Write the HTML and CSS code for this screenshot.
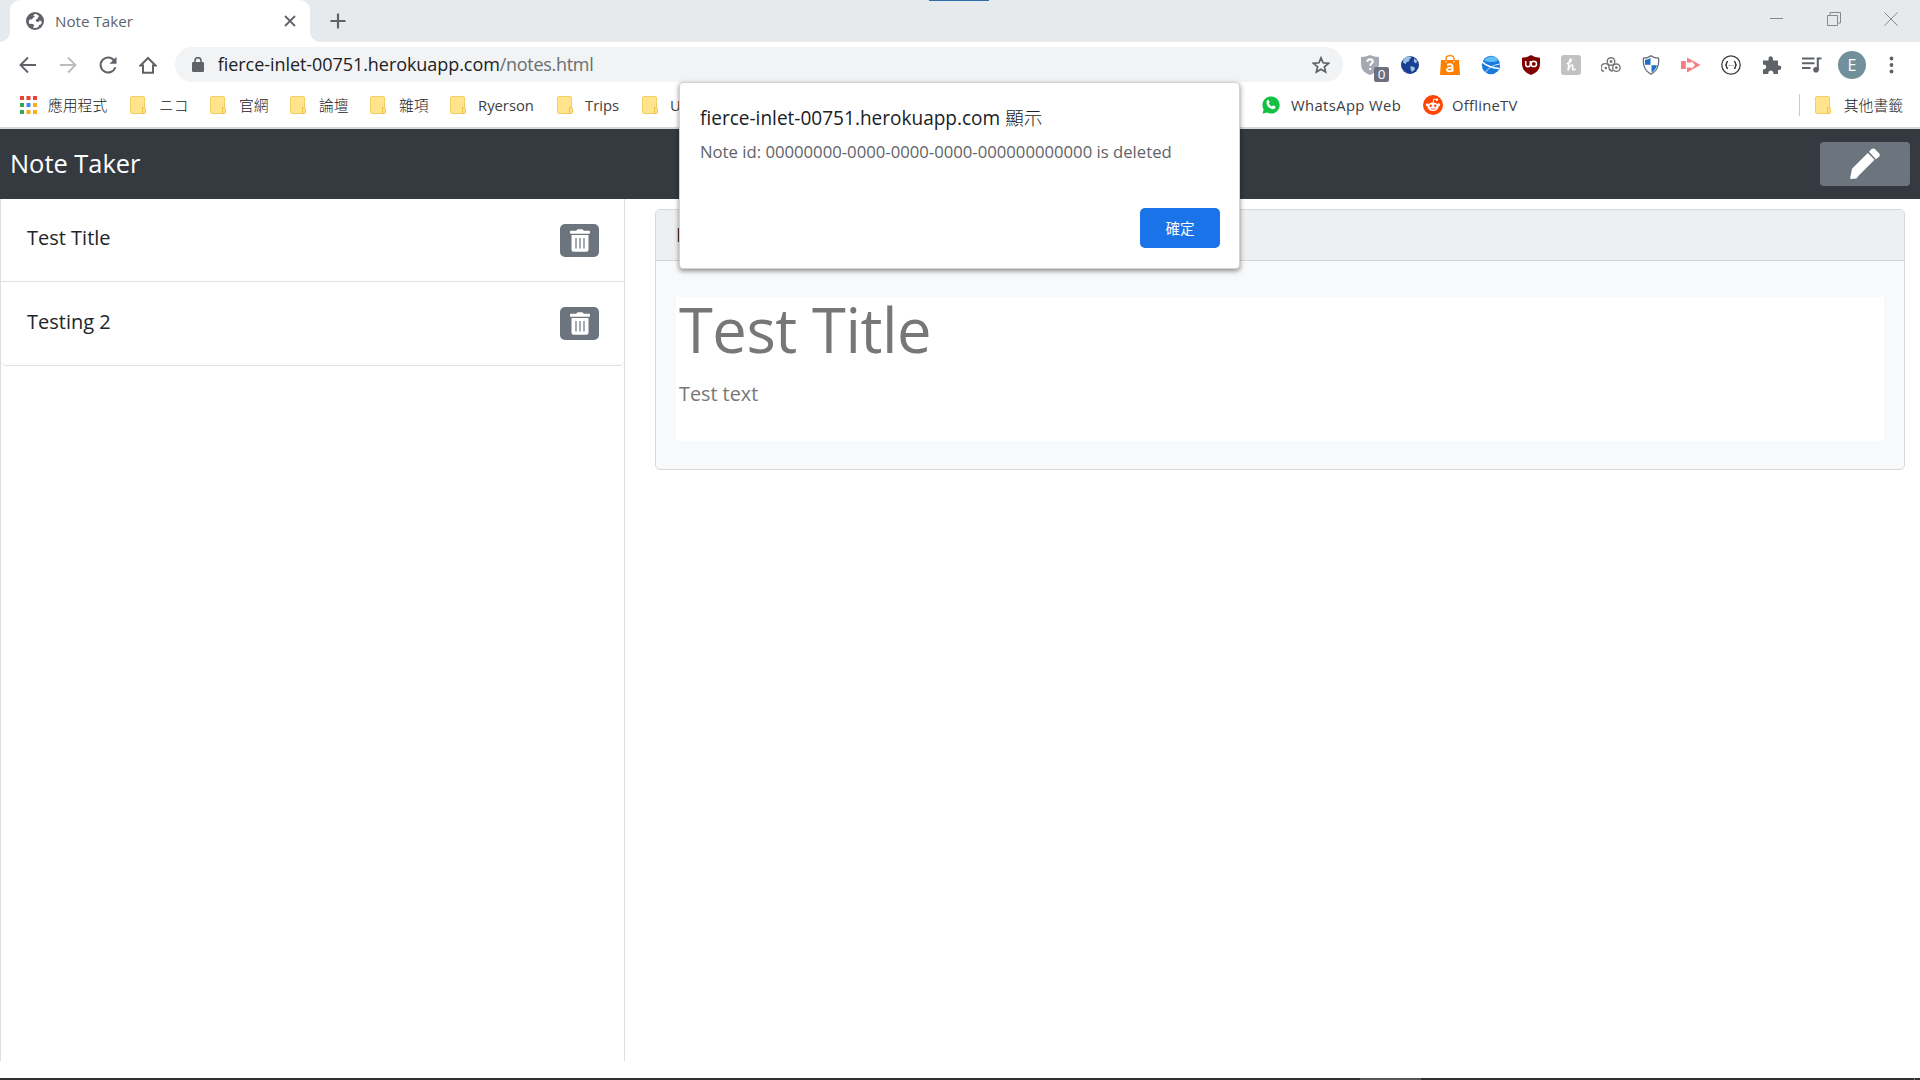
FILE: index.html
```
<!DOCTYPE html>
<html lang="zh-Hant">
<head>
<meta charset="utf-8">
<title>Note Taker</title>
<link rel="stylesheet" href="styles.css">
</head>
<body>
<svg class="defs" aria-hidden="true">
  <symbol id="folder" viewBox="0 0 16 18"><rect x=".5" y=".5" width="14" height="17" rx="1.5" fill="#ffe48d" stroke="#f2cf63"/><path d="M12.5 11.5h1.6q1.4 0 1.4 1.6v3q0 1.4-1.4 1.4h-1.6z" fill="#ffe48d" stroke="#e9bf46" stroke-width=".9"/></symbol>
  <symbol id="trash" viewBox="0 0 20 23"><path d="M.8 1.8h5.4L7 .7Q7.3.3 7.9.3h4.2q.6 0 .9.400l.8 1.100h5.400q.8 0 .8.8v1.300q0 .8-.8.8H.8q-.8 0-.8-.8V2.600q0-.8.8-.8z" fill="#fff"/><path d="M1.500 6h17v14.800q0 2-2 2h-13q-2 0-2-2z" fill="#fff"/><path d="M6 9v10.500M10 9v10.500M14 9v10.500" stroke="#6c757d" stroke-width="1.200"/></symbol>
</svg>

<header class="browser">
  <div class="tabstrip">
    <div class="tab">
      <svg class="globe" width="18" height="18" viewBox="0 0 18 18"><circle cx="9" cy="9" r="9" fill="#5f6368"/><path d="M10.500 2.200q-2.300-.5-3.300 1.300 1.900.3 1.400 1.800-1.700-.2-2 1.100 0 1.200-1.400 1.100-1.100-.2-2 .2-.9 2.300.2 4.200 3.300-.3 4.200.6 1 1.200-.2 2.500v1q3.300.4 5.200-1.300-.2-1.700 1.300-1.900 1.500-.2 1.900-2-.2-2.300-2.200-2.200-.6 1.800-2.700 1.100-2-.8-1-2.200 2.100-.2 1.800-1.800 1.400-.5 1.100-2z" fill="#fff"/></svg>
      <span class="tab-title">Note Taker</span>
      <svg width="12" height="12" viewBox="0 0 12 12"><path d="M1 1l10 10M11 1L1 11" stroke="#5f6368" stroke-width="1.800"/></svg>
    </div>
    <svg class="newtab" width="16" height="16" viewBox="0 0 16 16"><path d="M8 .5v15M.5 8h15" stroke="#5f6368" stroke-width="2.200"/></svg>
    <div class="win-buttons">
      <svg width="14" height="14" viewBox="0 0 14 14"><path d="M0 6.500h13" stroke="#85898c"/></svg>
      <svg width="14" height="14" viewBox="0 0 14 14"><path d="M.5 3.500h10v10H.5zM3 3V.5h10.500v10.500H11" fill="none" stroke="#85898c"/></svg>
      <svg width="14" height="14" viewBox="0 0 14 14"><path d="M.5.5l13 13M13.500.5l-13 13" stroke="#85898c"/></svg>
    </div>
    <div class="top-mark"></div>
  </div>

  <div class="toolbar">
    <div class="nav-icons">
      <svg width="18" height="18" viewBox="0 0 18 18"><path d="M17 9H2M9 1.500L1.500 9 9 16.500" fill="none" stroke="#5f6368" stroke-width="1.900"/></svg>
      <svg width="18" height="18" viewBox="0 0 18 18"><path d="M1 9h15M9 1.500L16.500 9 9 16.500" fill="none" stroke="#babcbe" stroke-width="1.900"/></svg>
      <svg width="18" height="18" viewBox="0 0 18 18"><path d="M15.500 5A7.500 7.500 0 1 0 16.300 11.200" fill="none" stroke="#5f6368" stroke-width="2"/><path d="M17.500.8v7h-7z" fill="#5f6368"/></svg>
      <svg width="18" height="18" viewBox="0 0 18 18"><path d="M1.500 9.500L9 2l7.500 7.500H14v7.300H4V9.500z" fill="none" stroke="#5f6368" stroke-width="2"/></svg>
    </div>
    <div class="omnibox">
      <svg width="12" height="15" viewBox="0 0 12 15"><rect y="5" width="12" height="10" rx="1.300" fill="#5f6368"/><path d="M3 6V3.700a3 3 0 0 1 6 0V6" fill="none" stroke="#5f6368" stroke-width="1.600"/></svg>
      <span class="url"><span class="domain">fierce-inlet-00751.herokuapp.com</span><span class="path">/notes.html</span></span>
      <svg width="18" height="18" viewBox="0 0 18 18"><path d="M9 1.800l2.100 5 5.400.5-4.100 3.500 1.200 5.300L9 13.300l-4.600 2.800 1.200-5.300L1.500 7.300l5.400-.5z" fill="none" stroke="#5f6368" stroke-width="1.700"/></svg>
    </div>
    <div class="extensions">
      <div class="ext shield-ext">
        <svg width="20" height="20" viewBox="0 0 20 20"><path d="M10 0q4 2 9 2v7q0 8-9 11Q1 17 1 9V2q5 0 9-2z" fill="#a5a9b4"/><path d="M7.300 6.800q.2-2.600 2.800-2.600 2.700.1 2.700 2.400 0 1.300-1.300 2.100-1.300.8-1.300 2.100M10.200 13v2" fill="none" stroke="#fff" stroke-width="2"/></svg>
        <span class="badge">0</span>
      </div>
      <svg class="ext" viewBox="0 0 20 20"><circle cx="10" cy="10" r="9" fill="#193f92"/><path d="M3.500 4Q6 1.500 10 1.200l1.500 1.600-2 1.400-.5 2.300-2.500.8-.8 2-2.700-1.800zM14 3.500l3.300 2.300-1.200 2.700-2.300-1.500zM10.500 11l3.800 1 .8 2-3 3-1.500-2.300z" fill="#9dbfe2"/><path d="M1.500 12.500q2 4.500 7.500 6-5-1.500-7.500-6z" fill="#e9f1f9"/></svg>
      <svg class="ext" viewBox="0 0 20 20"><path d="M1 5h18l1 15H0z" fill="#ff8000"/><path d="M6 7V3.500Q6 .7 10 .7t4 2.800V7" fill="none" stroke="#ff8000" stroke-width="1.300"/><path d="M7 9.800q5.500-1.800 5.500 1.700v5.300M12.500 12.700c-7-.6-6.500 3.500-3.600 3.500q2.600 0 3.600-1.700" fill="none" stroke="#fff" stroke-width="1.900"/><circle cx="6" cy="6.800" r=".7" fill="#fff"/><circle cx="14" cy="6.800" r=".7" fill="#fff"/></svg>
      <svg class="ext" viewBox="0 0 20 20"><circle cx="10" cy="10" r="9.200" fill="#1b7bdc"/><path d="M3 5.500Q6 1.500 11 1.500t6 4q-6 3-14 0z" fill="#61bdf6"/><path d="M.8 6.500q6 6 17.200 7" fill="none" stroke="#fff" stroke-width="1.700"/><path d="M19 9Q10 10 4.500 17" fill="none" stroke="#d4ebfc" stroke-width="1"/></svg>
      <svg class="ext" viewBox="0 0 20 20"><path d="M10 0q4 2.800 9 2.800V9q0 7.500-9 11Q1 16.500 1 9V2.800Q6 2.800 10 0z" fill="#800000"/><path d="M4.700 6v3.500q0 2.200 2.300 2.200t2.300-2.200V6" fill="none" stroke="#fff" stroke-width="1.500"/><circle cx="12.800" cy="8.900" r="2.700" fill="none" stroke="#fff" stroke-width="1.500"/></svg>
      <svg class="ext" viewBox="0 0 20 20"><rect width="20" height="20" rx="3" fill="#c2c2c2"/><path d="M5.500 9Q10.500 7 10.300 4.600q-1.300-1.400-2 2L7 15.500Q9.200 10 10.800 10t.7 2.700q-.5 3.300 3 1.300" fill="none" stroke="#fff" stroke-width="1.600"/></svg>
      <svg class="ext" viewBox="0 0 20 20"><g fill="none" stroke="#747474" stroke-width="1.400"><circle cx="10" cy="6.500" r="3.800"/><circle cx="15.400" cy="12.700" r="3.700"/><path d="M3 16.500A4 4 0 1 1 8 13M8 13q.6 3 4 3"/></g><g fill="#747474"><circle cx="10" cy="6.500" r="1.400"/><circle cx="15.400" cy="12.700" r="1.400"/><circle cx="4.800" cy="13" r="1.300"/></g></svg>
      <svg class="ext" viewBox="0 0 20 20"><path d="M10 .7q3.500 2.500 7.500 2.500 1.500 11-7.500 16.100Q1 14.200 2.500 3.200 6.500 3.200 10 .7z" fill="#fff" stroke="#5c6773" stroke-width="1.200"/><path d="M9.500 3v6.700H4V4.700q3-.2 5.500-1.700zM10.500 10.200H16q-1 4.500-5.500 7.300z" fill="#1e6fc6"/></svg>
      <svg class="ext" viewBox="0 0 20 20"><path d="M0 6h4.800v8H0z" fill="#f87b7f"/><path d="M6 2.500v15L19.500 10z" fill="#f87b7f"/><path d="M6 7.500h4.500V6l3.500 4-3.500 4v-1.500H6z" fill="#fff"/></svg>
      <svg class="ext" viewBox="0 0 20 20"><circle cx="10" cy="10" r="9.200" fill="#fff" stroke="#3c3f43" stroke-width="1.300"/><path d="M7 6.500Q5.500 6.500 5.500 8.300T4.300 10q1.200 0 1.200 1.700T7 13.500M13 6.500q1.500 0 1.500 1.800t1.200 1.700q-1.200 0-1.200 1.700T13 13.500" fill="none" stroke="#333" stroke-width="1.400"/><path d="M7.500 10.500h5" stroke="#777" stroke-width="1" stroke-dasharray="1 1"/></svg>
      <svg class="ext" viewBox="0 0 20 20"><path d="M1 5.500h5.500V4Q6.500 1.200 8.800 1.200T11 4v1.500h5v5h1q2.300 0 2.300 2.200T17 15h-1v4h-4.500q0-3.500-2.700-3.500T6.300 19H1v-4.500q3.200-.2 3.200-2.600T1 9.500z" fill="#5f6368"/></svg>
      <svg class="ext" viewBox="0 0 20 20"><path d="M0 3.500h12.500M0 8.300h12.500M0 13h8.500M19.500 3.500H15.800V15" fill="none" stroke="#5f6368" stroke-width="2.100"/><circle cx="14" cy="14.700" r="2.800" fill="#5f6368"/></svg>
      <span class="avatar">E</span>
      <svg class="ext" viewBox="0 0 20 20"><g fill="#5f6368"><circle cx="9.500" cy="3.500" r="1.900"/><circle cx="9.500" cy="10" r="1.900"/><circle cx="9.500" cy="16.500" r="1.900"/></g></svg>
    </div>
  </div>

  <nav class="bookmarks">
    <a class="bm bm-apps"><svg width="17" height="18" viewBox="0 0 17 18"><path d="M0 0h4v4H0zM6.500 0h4v4h-4zM13 0h4v4h-4z" fill="#ea4335"/><path d="M0 7h4v4H0zM0 14h4v4H0z" fill="#34a853"/><path d="M6.500 7h4v4h-4z" fill="#4285f4"/><path d="M13 7h4v4h-4zM6.500 14h4v4h-4zM13 14h4v4h-4z" fill="#fbae17"/></svg><span class="zh">應用程式</span></a>
    <a class="bm bm-zh"><svg width="16" height="18"><use href="#folder"/></svg><span class="zh">ニコ</span></a>
    <a class="bm bm-zh"><svg width="16" height="18"><use href="#folder"/></svg><span class="zh">官網</span></a>
    <a class="bm bm-zh"><svg width="16" height="18"><use href="#folder"/></svg><span class="zh">論壇</span></a>
    <a class="bm bm-zh"><svg width="16" height="18"><use href="#folder"/></svg><span class="zh">雜項</span></a>
    <a class="bm bm-ryerson"><svg width="16" height="18"><use href="#folder"/></svg><span>Ryerson</span></a>
    <a class="bm bm-trips"><svg width="16" height="18"><use href="#folder"/></svg><span>Trips</span></a>
    <a class="bm bm-u"><svg width="16" height="18"><use href="#folder"/></svg><span>U</span></a>
    <a class="bm bm-whatsapp"><svg width="18" height="18" viewBox="0 0 18 18"><path d="M.5 17.700l1.200-4.200A8.600 8.600 0 1 1 5 16.600z" fill="#12c143"/><path d="M5.200 4.300q1-1 1.700.1l.8 1.900-.9 1.200q1 2.100 3.200 3l1.100-1.200 2.200 1.100q.5.300.1 1.300-1 2-3.400 1.300Q6 11.800 4.700 8q-.5-2.500.5-3.700z" fill="#fff"/></svg><span>WhatsApp Web</span></a>
    <a class="bm bm-reddit"><svg width="20" height="20" viewBox="0 0 20 20"><circle cx="10" cy="10" r="10" fill="#ff4500"/><ellipse cx="10" cy="11.700" rx="5.600" ry="4.200" fill="#fff"/><circle cx="4.300" cy="9.800" r="1.500" fill="#fff"/><circle cx="15.700" cy="9.800" r="1.500" fill="#fff"/><circle cx="13.900" cy="4.700" r="1.200" fill="#fff"/><path d="M10 8l.8-4 3 .7" fill="none" stroke="#fff" stroke-width=".9"/><circle cx="7.700" cy="10.800" r="1.200" fill="#ff4500"/><circle cx="12.300" cy="10.800" r="1.200" fill="#ff4500"/><path d="M7.700 13.600q2.300 1.400 4.600 0" fill="none" stroke="#ff4500" stroke-width=".8"/></svg><span>OfflineTV</span></a>
    <a class="bm bm-other"><svg width="16" height="18"><use href="#folder"/></svg><span class="zh">其他書籤</span></a>
  </nav>
</header>

<div class="navbar">
  <span class="brand">Note Taker</span>
  <button class="edit"><svg width="32" height="32" viewBox="0 0 32 32"><path d="M3 20.800L18.800 5l6.800 6.800L9.800 27.600 7.500 30.500 2 31q-1 0-.8-1z" fill="#fff"/><path d="M20 3.800L22.500 1.300q1.800-1.500 3.500 0l4 4q1.600 1.700 0 3.500l-3 2.500z" fill="#fff"/></svg></button>
</div>

<main class="page">
  <aside class="notes">
    <ul class="note-list">
      <li class="note"><span>Test Title</span><button class="delete"><svg width="20" height="23"><use href="#trash"/></svg></button></li>
      <li class="note"><span>Testing 2</span><button class="delete"><svg width="20" height="23"><use href="#trash"/></svg></button></li>
    </ul>
  </aside>
  <section class="card">
    <div class="card-header">N</div>
    <div class="card-body">
      <div class="editor">
        <div class="title">Test Title</div>
        <div class="text">Test text</div>
      </div>
    </div>
  </section>
</main>

<footer class="taskbar"><span class="active-app"></span><span class="show-desktop"></span></footer>

<div class="dialog">
  <div class="dialog-title">fierce-inlet-00751.herokuapp.com <span class="zh">顯示</span></div>
  <div class="dialog-text">Note id: 00000000-0000-0000-0000-000000000000 is deleted</div>
  <button class="ok"><span>確定</span></button>
</div>
</body>
</html>
```
FILE: styles.css
```
* { box-sizing: border-box; }
body {
  margin: 0;
  width: 1920px;
  height: 1080px;
  overflow: hidden;
  display: flex;
  flex-direction: column;
  background: #fff;
  color: #212529;
  font-family: "Open Sans", "Noto Sans CJK TC", sans-serif;
  position: relative;
}
svg { display: block; flex: none; }
button { border: 0; padding: 0; font-family: inherit; display: flex; align-items: center; justify-content: center; flex: none; }
.defs { position: absolute; width: 0; height: 0; }
.zh { font-weight: 300; }

/* Tab strip */
.browser { flex: none; }
.tabstrip { height: 42px; background: #e6eaec; display: flex; align-items: flex-start; padding-left: 10px; position: relative; }
.tab { width: 300px; height: 42px; background: #fff; border-radius: 10px 10px 0 0; display: flex; align-items: center; padding: 0 14px 0 16px; position: relative; }
.tab::before, .tab::after { content: ""; position: absolute; bottom: 0; width: 10px; height: 10px; }
.tab::before { left: -10px; background: radial-gradient(circle at 0 0, #e6eaec 9.5px, #fff 10px); }
.tab::after { right: -10px; background: radial-gradient(circle at 100% 0, #e6eaec 9.5px, #fff 10px); }
.tab-title { flex: 1; margin-left: 11px; font-size: 15.2px; color: #5f6368; }
.newtab { margin: 13px 0 0 20px; }
.win-buttons { margin-left: auto; display: flex; gap: 43px; padding: 12px 22px 0 0; }
.top-mark { position: absolute; left: 929px; top: 0; width: 60px; height: 1px; background: #2b6ea9; }

/* Toolbar */
.toolbar { height: 45px; display: flex; align-items: center; padding: 0 18px 0 19px; }
.nav-icons { display: flex; gap: 22px; width: 156px; }
.omnibox { width: 1170px; height: 35px; border-radius: 18px; background: #f1f3f4; display: flex; align-items: center; padding: 0 13px 0 17px; }
.url { flex: 1; margin-left: 14px; padding-bottom: 2px; font-size: 18px; white-space: nowrap; }
.domain { color: #202124; letter-spacing: -0.06px; }
.path { color: #6a6e72; letter-spacing: -0.3px; }
.extensions { display: flex; align-items: center; gap: 20px; padding-left: 17px; }
.ext { width: 20px; height: 20px; margin: 0 .15px 0 0; }
.shield-ext { position: relative; }
.badge { position: absolute; left: 14px; top: 12px; width: 15px; height: 15px; border-radius: 2px; background: #6d6f7f; color: #fff; font-size: 13.5px; line-height: 15px; text-align: center; }
.avatar { width: 28px; height: 28px; margin: 0 -4px; border-radius: 50%; background: #71909c; color: #fff; font-size: 16px; line-height: 28px; text-align: center; }

/* Bookmarks */
.bookmarks { height: 42px; display: flex; align-items: center; padding: 0 17px 5px 20px; border-bottom: 2px solid #d5d8dc; color: #3c4043; font-size: 14.8px; white-space: nowrap; }
.bm { display: flex; align-items: center; gap: 13px; height: 22px; flex: none; }
.bm .zh { padding-bottom: 1px; color: #202124; }
.bm-apps { width: 110px; gap: 11px; }
.bm-zh { width: 80px; }
.bm-ryerson { width: 107px; gap: 12px; }
.bm-trips { width: 85px; gap: 12px; }
.bm-u { width: 620px; gap: 12px; }
.bm-whatsapp { width: 161px; letter-spacing: .38px; gap: 11px; }
.bm-reddit { letter-spacing: .25px; gap: 9px; }
.bm-other { margin-left: auto; border-left: 1px solid #c9cccf; padding-left: 15px; }

/* Application */
.navbar { height: 70px; flex: none; background: #343a40; display: flex; align-items: center; justify-content: space-between; padding: 0 10px; }
.brand { color: #fff; font-size: 25.4px; padding-bottom: 2px; }
.edit { width: 90px; height: 44px; background: #6c757d; border-radius: 4px; }
.page { flex: 1; display: flex; align-items: flex-start; }
.notes { width: 625px; height: 862px; border: 1px solid #dedfe0; border-width: 0 1px; }
.note-list { list-style: none; margin: 0; padding: 0; border-bottom: 1px solid #dedfe0; border-radius: 0 0 5px 5px; }
.note { height: 82px; display: flex; align-items: center; justify-content: space-between; padding: 0 25px 0 26px; font-size: 20px; }
.note + .note { border-top: 1px solid #dedfe0; height: 84px; }
.note span { padding-bottom: 5px; }
.delete { width: 39px; height: 33px; border-radius: 5px; background: #6c757d; }
.card { width: 1250px; height: 261px; margin: 10px 0 0 30px; border: 1px solid #d6d8da; border-radius: 5px; background: #f8f9fa; overflow: hidden; }
.card-header { height: 51px; border-bottom: 1px solid #d3d5d7; background: #eeeff1; padding-left: 20px; font-size: 20px; line-height: 50px; }
.card-body { padding: 36px 20px 0; }
.editor { height: 144px; background: #fff; padding: 0 3px; color: #777; }
.title { font-size: 61.5px; line-height: 64px; letter-spacing: -.5px; }
.text { font-size: 19.8px; line-height: 30px; margin-top: 18px; }

/* Taskbar edge */
.taskbar { height: 2px; flex: none; background: #313134; display: flex; justify-content: space-between; padding: 0 5px 0 1360px; }
.active-app { width: 61px; background: #575757; }
.show-desktop { width: 1px; background: #77777a; }

/* Alert */
.dialog { position: absolute; left: 679px; top: 82px; width: 561px; height: 187px; border: 1px solid #d0d2d4; border-radius: 4px; background: #fff; box-shadow: 0 2px 5px rgba(0,0,0,.45); display: flex; flex-direction: column; padding: 19px 19px 0 20px; }
.dialog-title { font-size: 19.05px; line-height: 32px; color: #202124; white-space: nowrap; }
.dialog-title .zh { font-size: 18.500px; }
.dialog-text { font-size: 16.7px; line-height: 24px; margin-top: 6px; color: #5f6368; white-space: nowrap; }
.ok { width: 80px; height: 40px; margin: 44px 0 0 auto; border-radius: 5px; background: #1a73e8; color: #fff; font-size: 14.6px; }
.ok span { padding-bottom: 2px; }
```
